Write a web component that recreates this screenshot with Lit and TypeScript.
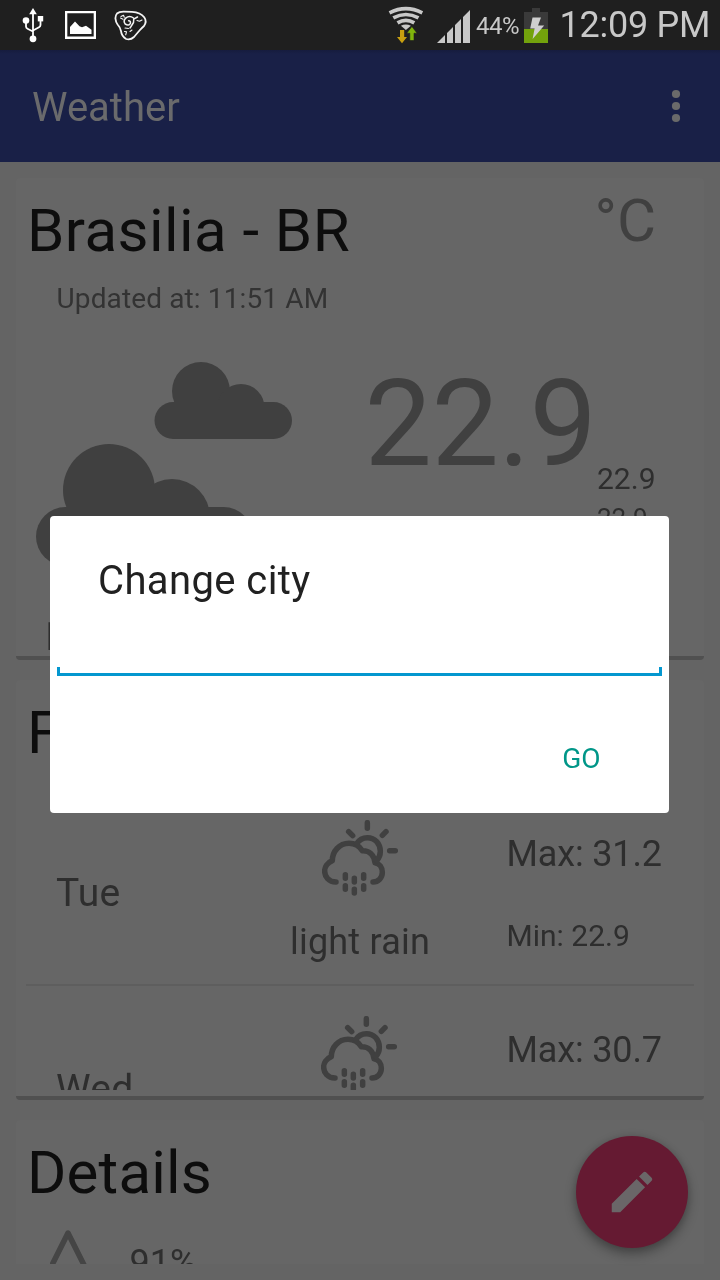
import { LitElement, html, css } from "lit";
import { customElement, property } from "lit/decorators.js";

interface Day { name: string; text: string; max: string; min: string; }

@customElement("status-bar")
class StatusBar extends LitElement {
  static styles = css`
    :host { display: flex; height: 50px; background: #1f1f1f; color: #c8c8c8; justify-content: space-between; will-change: transform; }
    .side { display: flex; }
    svg { display: block; height: 50px; }
    .pct { font-size: 24px; line-height: 24px; padding-top: 14px; width: 47px; white-space: nowrap; letter-spacing: -0.5px; }
    .clock { font-size: 36px; line-height: 36px; padding: 6.500px 0 0 9.500px; width: 170px; box-sizing: border-box; white-space: nowrap; letter-spacing: -0.25px; }
  `;
  render() {
    return html`
      <div class="side">
        <svg width="160" viewBox="0 0 160 50">
          <g fill="#fff">
            <path d="M33 8l3.800 6.200h-7.600z"/><circle cx="26" cy="20.500" r="3.300"/>
            <rect x="37.800" y="16" width="5.400" height="5.400"/><circle cx="33" cy="38.800" r="3.400"/>
            <path d="M33 12v26M26 21v5.500q0 1.500 1.500 2.200L33 31.500M40.500 20v5q0 1.500-1.500 2.300L33 30.500" fill="none" stroke="#fff" stroke-width="1.800"/>
            <path fill-rule="evenodd" d="M65 11h31v28H65zM67.300 13.300v23.200h26.400V13.300z"/>
            <path d="M70 34V27l5-5.500 4.500 4.800 2.500 1 4-1.500 5.500 4V34z"/>
          </g>
          <g fill="none" stroke="#f4f4f4" stroke-width="1.500" stroke-linecap="round" stroke-linejoin="round">
            <path stroke-width="1.800" d="M117 13.500q2-1.800 6.500-1.800l8.500.1q8.500.3 12.200 5.500 3 4.200-.2 8.700-2.300 2-4.500 4.500-3 3.500-5.500 6.500-3.500 3.300-7.800 2-4.500-2.300-5.300-8.300-.8-3.500-3.300-6.200-1.800-2.200-2.200-6.200.1-3 1.600-4.800z"/>
            <path d="M133.500 18q-4-2.800-7.500-.1-3.300 3-.8 6.100 3.500 2.300 5.200-.7.5-2.500-1.800-2.600M137.500 17l-3.800 2.200-.2 3.300-2.500 4-1 1.500"/>
            <path stroke-width="1.100" d="M121 16.500l2.500-1.300.8 2M120.500 18l2.500 1.200M137 20.500l2.500.8 2.500-1.300M124.500 31.500l2 .3-.8 3M132 30l-2 1.500M128.500 28.500l-3.500-.5"/>
          </g>
        </svg>
      </div>
      <div class="side">
        <svg width="92" viewBox="384 0 92 50">
          <g fill="none" stroke="#c8c8c8">
            <path stroke-width="3.700" d="M389.500 12.800q16.400-8.200 32.800 0"/>
            <path stroke-width="3.700" d="M393.300 17.900q12.600-6.800 25.200 0"/>
            <path stroke-width="3.700" d="M397.500 22.900q8.400-5 16.800 0"/>
          </g>
          <path fill="#c8c8c8" d="M400.900 25.700q5-2.500 10 0l-5 4.200z"/>
          <path fill="#c8a010" d="M400 30h4.200v7h2.800l-5 6.200-5-6.200h3z"/>
          <path fill="#80b40c" stroke="#1f1f1f" stroke-width=".6" d="M409.800 40.500h4.200v-7.300h3.100l-5.200-6.700-5.200 6.700h3.100z"/>
          <path fill="#c8c8c8" d="M437 43l8-8v8zM447 43V33l6-6v16zM455 43V25l6-6v24zM463 43V17l7-7v33z"/>
        </svg>
        <div class="pct">44%</div>
        <svg width="27" viewBox="523 0 27 50">
          <path fill="#3a3a3a" d="M524 12h8V8h8v4h8v17h-24z"/><path fill="#73a20c" d="M524 29h24v14h-24z"/>
          <path fill="#cfcfcf" d="M532.500 17.500h8.500l-3 8h6.200L532.600 39l2-10.500h-4.400z"/>
        </svg>
        <div class="clock">12:09 PM</div>
      </div>`;
  }
}

const rainIcon = html`<svg class="rain" viewBox="156 60 228 228" width="76" height="76">
  <g fill="none" stroke="#404040" stroke-width="16.500" stroke-linecap="round" stroke-linejoin="round">
    <path d="M198 246C176 246 164 230 164 213C164 201 172 188 187 182C187 154 208 130 237 130C252 130 268 138 277 152C297 151 312 164 315 188C328 190 337 202 337 217C337 234 325 246 309 246"/>
    <path d="M260 131C270 115 281 113 292 113C315 113 331 131 331 154C331 165 327 175 320 182"/>
    <path d="M292 68v17M236 95l12 12M348 95l-11 11M359 152h17M226 224v11M226 257v11M253 235v11M253 268v11M281 224v11M281 257v11"/>
  </g></svg>`;

@customElement("forecast-row")
class ForecastRow extends LitElement {
  @property({ attribute: false }) day!: Day;
  static styles = css`
    :host { display: grid; grid-template-columns: 218px 232px 1fr; height: 194px; color: #2e2e2e; border-bottom: 2px solid #5e5e5e; font-size: 36px; line-height: 36px; white-space: nowrap; }
    :host(:nth-child(2)) .mid { margin-left: -1px; margin-right: 1px; }
    .name { padding: 85.300px 0 0 30px; font-size: 39px; letter-spacing: 0.3px; }
    .mid { display: flex; flex-direction: column; align-items: center; padding-top: 30px; gap: 28px; letter-spacing: 0.2px; }
    .rain { display: block; }
    .max { padding-top: 45.500px; padding-left: 30.500px; letter-spacing: -0.15px; }
    .min { padding: 49px 0 0 30.500px; font-size: 30px; line-height: 30px; }
  `;
  render() {
    return html`<div class="name">${this.day.name}</div>
      <div class="mid">${rainIcon}<div>${this.day.text}</div></div>
      <div><div class="max">Max: ${this.day.max}</div><div class="min">Min: ${this.day.min}</div></div>`;
  }
}

@customElement("app-root")
class AppRoot extends LitElement {
  static styles = css`
    :host { display: flex; flex-direction: column; position: relative; width: 720px; height: 1280px; overflow: hidden; background: #646464; font-family: Roboto, "Noto Sans", sans-serif; }
    .bar { height: 112px; flex: none; box-sizing: border-box; background: linear-gradient(#161c3e, #192047 4px); color: #6a6a6c; display: flex; justify-content: space-between; padding: 0 38px 0 32px; will-change: transform; }
    .bar h1 { margin: 38px 0 0; font-size: 40px; line-height: 40px; font-weight: 400; }
    .bar svg { margin-top: 36px; }
    main { margin: 16px 16px; height: 1086px; overflow: hidden; display: flex; flex-direction: column; gap: 20px; flex: none; will-change: transform; }
    .card { flex: none; box-sizing: border-box; background: #666; border-radius: 4px; border-bottom: 4px solid #505050; overflow: hidden; }
    .now { height: 482px; } .fore { height: 420px; } .det { height: 300px; }
    h2 { margin: 0; padding: 22.500px 0 0 11px; font-size: 60px; line-height: 60px; font-weight: 400; color: #0d0d0d; white-space: nowrap; letter-spacing: 0.450px; }
    .det h2 { letter-spacing: 0.2px; }
    .head { display: flex; justify-content: space-between; }
    .unit { font-size: 60px; line-height: 60px; padding: 12.500px 48px 0 0; color: #404040; }
    .upd { font-size: 28px; line-height: 28px; margin: 24px 0 0 40.500px; color: #333; letter-spacing: 0.130px; }
    .body { display: grid; grid-template-columns: 326px 255px 1fr; }
    .body svg { display: block; margin: 49px 0 0 20px; }
    .desc { font-size: 36px; line-height: 36px; margin: 18px 0 0 30px; color: #2e2e2e; }
    .temp { font-size: 120px; line-height: 120px; padding: 51.500px 0 0 22.500px; color: #404040; letter-spacing: -0.5px; }
    .range { padding-top: 151.500px; color: #2e2e2e; font-size: 30px; line-height: 30px; }
    .low { font-size: 26px; line-height: 26px; margin-top: 10.500px; }
    .list { margin: 27.500px 10px 0; height: 300px; overflow: hidden; }
    .hum { display: flex; padding: 27px 0 0 34px; color: #2e2e2e; font-size: 36px; line-height: 36px; }
    .hum div { padding: 15.700px 0 0 41.500px; }
    .fab { position: absolute; left: 576px; top: 1136px; width: 112px; height: 112px; border-radius: 50%; background: #651a32; display: grid; place-items: center; box-shadow: 0 6px 12px rgba(0,0,0,.32), 0 0 8px rgba(0,0,0,.12); }
    .dialog { position: absolute; left: 50px; top: 516px; width: 619px; height: 297px; box-sizing: border-box; background: #fff; border-radius: 4px; padding: 0 7px; display: flex; flex-direction: column; will-change: transform; }
    .title { font-size: 40px; line-height: 40px; margin: 45px 0 0 41px; color: #212121; letter-spacing: 0.4px; }
    .field { margin-top: 66px; height: 9px; flex: none; background: linear-gradient(#0497cf,#0497cf) 0 0/3px 9px no-repeat, linear-gradient(#0497cf,#0497cf) 100% 0/3px 9px no-repeat, linear-gradient(#0497cf,#0497cf) 0 100%/100% 3px no-repeat; }
    .go { font-size: 28px; line-height: 28px; margin: 68.500px 61.500px 0 0; align-self: flex-end; color: #009688; }
  `;
  private days: Day[] = [
    { name: "Tue", text: "light rain", max: "31.2", min: "22.9" },
    { name: "Wed", text: "light rain", max: "30.7", min: "22.4" },
  ];
  render() {
    return html`
      <status-bar></status-bar>
      <div class="bar"><h1>Weather</h1>
        <svg width="12" height="40" viewBox="0 0 12 40" fill="#6a6a6a"><circle cx="6" cy="8" r="4.100"/><circle cx="6" cy="20" r="4.100"/><circle cx="6" cy="32" r="4.100"/></svg>
      </div>
      <main>
        <section class="card now">
          <div class="head"><h2>Brasilia - BR</h2><div class="unit">°C</div></div>
          <div class="upd">Updated at: 11:51 AM</div>
          <div class="body">
            <div>
              <svg width="256" height="240" viewBox="36 362 256 240" fill="#404040">
                <circle cx="201" cy="391" r="29"/><circle cx="241" cy="407.500" r="23.500"/><rect x="154.500" y="402" width="137.500" height="37" rx="18.500"/>
                <circle cx="109" cy="490" r="46"/><circle cx="172" cy="517" r="38"/><rect x="36" y="507" width="217" height="59" rx="29.500"/>
              </svg>
              <div class="desc">broken clouds</div>
            </div>
            <div class="temp">22.9</div>
            <div class="range"><div>22.9</div><div class="low">22.9</div></div>
          </div>
        </section>
        <section class="card fore">
          <h2>Forecast</h2>
          <div class="list">${this.days.map((d) => html`<forecast-row .day=${d}></forecast-row>`)}</div>
        </section>
        <section class="card det">
          <h2>Details</h2>
          <div class="hum">
            <svg width="38" height="60" viewBox="0 0 38 60" fill="none" stroke="#454545" stroke-width="5.500" stroke-linejoin="round"><path d="M18 3L2.500 34C-4 48 6 57 18 57S40 48 33.500 34z"/></svg>
            <div>91%</div>
          </div>
        </section>
      </main>
      <div class="fab"><svg width="54" height="54" viewBox="0 0 24 24" fill="#6a6668"><path d="M3 17.250V21h3.750L17.810 9.940l-3.750-3.750L3 17.250zM20.710 7.040c.39-.39.39-1.020 0-1.410l-2.340-2.340c-.39-.39-1.020-.39-1.410 0l-1.830 1.830 3.750 3.750 1.830-1.830z"/></svg></div>
      <div class="dialog" role="dialog">
        <div class="title">Change city</div>
        <div class="field"></div>
        <div class="go">GO</div>
      </div>`;
  }
}
